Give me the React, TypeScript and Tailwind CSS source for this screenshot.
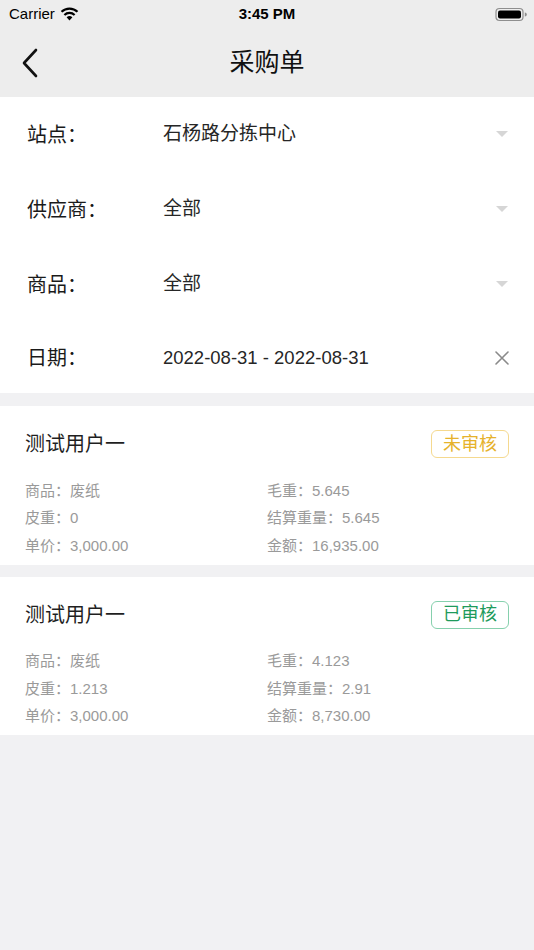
import React from 'react';

const font = { fontFamily: '"Liberation Sans", "Noto Sans CJK SC", sans-serif' };

const Arrow = () => (
  <svg width="12" height="7" viewBox="0 0 12 7">
    <path d="M0 0 H12 L6 6 Z" fill="#d6d6d6" />
  </svg>
);

const Close = () => (
  <svg width="14" height="14" viewBox="0 0 14 14">
    <path d="M1 1 L13 13 M13 1 L1 13" stroke="#8a8a8a" strokeWidth="1.6" strokeLinecap="round" />
  </svg>
);

const FormRow: React.FC<{ label: string; value: string; icon: React.ReactNode; h: string; vs?: string }> = ({
  label,
  value,
  icon,
  h,
  vs = 'text-[19px]',
}) => (
  <div className={`flex items-center ${h} pl-[27px] pr-[25px]`}>
    <div className="w-[136px] text-[20px] text-[#1a1a1a]">{label}</div>
    <div className={`flex-1 ${vs} text-[#262626]`}>{value}</div>
    <div className="flex items-center justify-center w-[14px]">{icon}</div>
  </div>
);

type Order = {
  name: string;
  status: string;
  done: boolean;
  rows: [string, string][];
};

const orders: Order[] = [
  {
    name: '测试用户一',
    status: '未审核',
    done: false,
    rows: [
      ['商品：废纸', '毛重：5.645'],
      ['皮重：0', '结算重量：5.645'],
      ['单价：3,000.00', '金额：16,935.00'],
    ],
  },
  {
    name: '测试用户一',
    status: '已审核',
    done: true,
    rows: [
      ['商品：废纸', '毛重：4.123'],
      ['皮重：1.213', '结算重量：2.91'],
      ['单价：3,000.00', '金额：8,730.00'],
    ],
  },
];

const Card: React.FC<{ o: Order }> = ({ o }) => (
  <div className="bg-white pl-[25px] pr-[25px] pt-[23px] pb-[5px]">
    <div className="flex items-center justify-between h-[30px]">
      <div className="text-[20px] text-[#1f1f1f]">{o.name}</div>
      <div
        className={
          o.done
            ? 'h-[28px] w-[78px] flex items-center justify-center rounded-[6px] border border-[#86d0ad] text-[18px] text-[#1f9b5c]'
            : 'h-[28px] w-[78px] flex items-center justify-center rounded-[6px] border border-[#f5d98f] text-[18px] text-[#e6b22c]'
        }
      >
        {o.status}
      </div>
    </div>
    <div className="mt-[18px]">
      {o.rows.map((r, i) => (
        <div key={i} className="grid grid-cols-[242px_1fr] h-[27.5px] items-center text-[15px] text-[#9a9a9a]">
          <div>{r[0]}</div>
          <div>{r[1]}</div>
        </div>
      ))}
    </div>
  </div>
);

export default function App() {
  return (
    <div className="w-[534px] min-h-[950px] bg-[#f1f1f3]" style={font}>
      <div className="bg-[#ededed]">
        <div className="h-[28px] flex items-center justify-between pl-[9px] pr-[7px] relative">
          <div className="flex items-center gap-[5px] text-[15px] text-black">
            <span>Carrier</span>
            <svg width="19" height="14" viewBox="0 0 19 14">
              <path d="M9.5 13.5 L6.6 10.3 A4.2 4.2 0 0 1 12.4 10.3 Z" fill="#000" />
              <path d="M4.4 8 A7.4 7.4 0 0 1 14.6 8" stroke="#000" strokeWidth="2.2" fill="none" />
              <path d="M1.5 4.8 A11.5 11.5 0 0 1 17.5 4.8" stroke="#000" strokeWidth="2.2" fill="none" />
            </svg>
          </div>
          <div className="absolute left-0 right-0 text-center text-[15px] font-semibold text-black pointer-events-none">3:45 PM</div>
          <svg width="32" height="15" viewBox="0 0 32 15">
            <rect x="1" y="1.5" width="27" height="12" rx="3.5" fill="none" stroke="#8e8e8e" strokeWidth="1.2" />
            <rect x="3" y="3.5" width="23" height="8" rx="2" fill="#000" />
            <path d="M29.8 5.5 a2 2 0 0 1 0 4 Z" fill="#8e8e8e" />
          </svg>
        </div>
        <div className="h-[69px] flex items-center relative">
          <div className="pl-[20px]">
            <svg width="20" height="32" viewBox="0 0 20 32">
              <path d="M16 3 L4 16 L16 29" stroke="#111" strokeWidth="2.6" fill="none" strokeLinecap="round" strokeLinejoin="round" />
            </svg>
          </div>
          <div className="absolute left-0 right-0 text-center text-[25px] text-[#111] pointer-events-none">采购单</div>
        </div>
      </div>

      <div className="bg-white">
        <FormRow label="站点：" value="石杨路分拣中心" icon={<Arrow />} h="h-[75px]" />
        <FormRow label="供应商：" value="全部" icon={<Arrow />} h="h-[75px]" />
        <FormRow label="商品：" value="全部" icon={<Arrow />} h="h-[75px]" />
        <FormRow label="日期：" value="2022-08-31 - 2022-08-31" icon={<Close />} h="h-[71px]" vs="text-[18.5px]" />
      </div>

      <div className="flex flex-col gap-[12px] pt-[13px]">
        {orders.map((o, i) => (
          <Card key={i} o={o} />
        ))}
      </div>
    </div>
  );
}
